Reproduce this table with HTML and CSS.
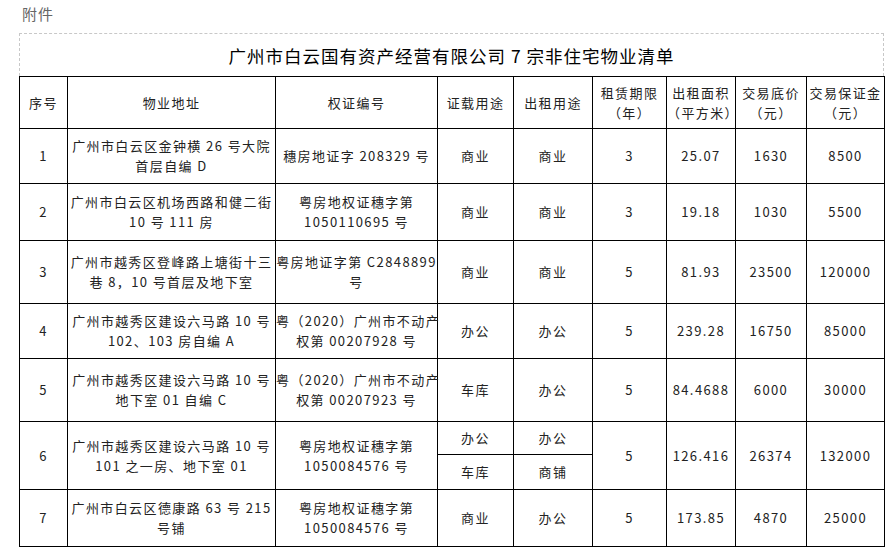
FILE: index.html
```html
<!DOCTYPE html>
<html lang="zh-CN">
<head>
<meta charset="utf-8">
<title>附件</title>
<link rel="stylesheet" href="styles.css">
</head>
<body>
<div class="page">
  <div class="label">附件</div>
  <div class="sheet">
    <div class="title">广州市白云国有资产经营有限公司 7 宗非住宅物业清单</div>
    <table class="list">
      <colgroup>
        <col class="c-no"><col class="c-addr"><col class="c-cert"><col class="c-use"><col class="c-rent"><col class="c-term"><col class="c-area"><col class="c-price"><col class="c-dep">
      </colgroup>
      <thead>
        <tr class="r-head">
          <th>序号</th>
          <th>物业地址</th>
          <th>权证编号</th>
          <th>证载用途</th>
          <th>出租用途</th>
          <th>租赁期限<br>（年）</th>
          <th>出租面积<br>（平方米）</th>
          <th>交易底价<br>（元）</th>
          <th>交易保证金<br>（元）</th>
        </tr>
      </thead>
      <tbody>
        <tr class="r1">
          <td>1</td>
          <td>广州市白云区金钟横 26 号大院<br>首层自编 D</td>
          <td>穗房地证字 208329 号</td>
          <td>商业</td>
          <td>商业</td>
          <td>3</td>
          <td>25.07</td>
          <td>1630</td>
          <td>8500</td>
        </tr>
        <tr class="r2">
          <td>2</td>
          <td>广州市白云区机场西路和健二街<br>10 号 111 房</td>
          <td>粤房地权证穗字第<br>1050110695 号</td>
          <td>商业</td>
          <td>商业</td>
          <td>3</td>
          <td>19.18</td>
          <td>1030</td>
          <td>5500</td>
        </tr>
        <tr class="r3">
          <td>3</td>
          <td>广州市越秀区登峰路上塘街十三<br>巷 8，10 号首层及地下室</td>
          <td>粤房地证字第 C2848899<br>号</td>
          <td>商业</td>
          <td>商业</td>
          <td>5</td>
          <td>81.93</td>
          <td>23500</td>
          <td>120000</td>
        </tr>
        <tr class="r4">
          <td>4</td>
          <td>广州市越秀区建设六马路 10 号<br>102、103 房自编 A</td>
          <td>粤（2020）广州市不动产<br>权第 00207928 号</td>
          <td>办公</td>
          <td>办公</td>
          <td>5</td>
          <td>239.28</td>
          <td>16750</td>
          <td>85000</td>
        </tr>
        <tr class="r5">
          <td>5</td>
          <td>广州市越秀区建设六马路 10 号<br>地下室 01 自编 C</td>
          <td>粤（2020）广州市不动产<br>权第 00207923 号</td>
          <td>车库</td>
          <td>办公</td>
          <td>5</td>
          <td>84.4688</td>
          <td>6000</td>
          <td>30000</td>
        </tr>
        <tr class="r6a">
          <td rowspan="2">6</td>
          <td rowspan="2">广州市越秀区建设六马路 10 号<br>101 之一房、地下室 01</td>
          <td rowspan="2">粤房地权证穗字第<br>1050084576 号</td>
          <td>办公</td>
          <td>办公</td>
          <td rowspan="2">5</td>
          <td rowspan="2">126.416</td>
          <td rowspan="2">26374</td>
          <td rowspan="2">132000</td>
        </tr>
        <tr class="r6b">
          <td>车库</td>
          <td>商铺</td>
        </tr>
        <tr class="r7">
          <td>7</td>
          <td>广州市白云区德康路 63 号 215<br>号铺</td>
          <td>粤房地权证穗字第<br>1050084576 号</td>
          <td>商业</td>
          <td>办公</td>
          <td>5</td>
          <td>173.85</td>
          <td>4870</td>
          <td>25000</td>
        </tr>
      </tbody>
    </table>
  </div>
</div>
</body>
</html>
```

FILE: styles.css
```css
* {
  box-sizing: border-box;
}

body {
  margin: 0;
  background: #fff;
  font-family: "Noto Sans CJK SC", "Noto Sans", sans-serif;
  color: #222;
}

.page {
  padding: 4px 0 0 19px;
}

.label {
  margin-left: 3px;
  font-size: 15px;
  line-height: 20px;
  color: #666;
  letter-spacing: 1px;
}

.sheet {
  margin-top: 9px;
  width: 865px;
}

.title {
  height: 43px;
  border: 1px dashed #c8c8c8;
  border-bottom: none;
  display: flex;
  align-items: center;
  justify-content: center;
  font-size: 17.5px;
  letter-spacing: 1px;
  color: #000;
}

.list {
  width: 865px;
  border-collapse: collapse;
  table-layout: fixed;
  font-size: 13px;
}

.list th,
.list td {
  border: 1px solid #000;
  text-align: center;
  vertical-align: middle;
  padding: 0;
  font-weight: normal;
  line-height: 20px;
  letter-spacing: 1.4px;
  white-space: nowrap;
}

.c-no { width: 48px; }
.c-addr { width: 208px; }
.c-cert { width: 162px; }
.c-use { width: 76px; }
.c-rent { width: 79px; }
.c-term { width: 74px; }
.c-area { width: 69px; }
.c-price { width: 71px; }
.c-dep { width: 78px; }

.r-head { height: 52px; }
.r1 { height: 55px; }
.r2 { height: 57px; }
.r3 { height: 63px; }
.r4 { height: 55px; }
.r5 { height: 63px; }
.r6a { height: 33px; }
.r6b { height: 35px; }
.r7 { height: 57px; }
```
